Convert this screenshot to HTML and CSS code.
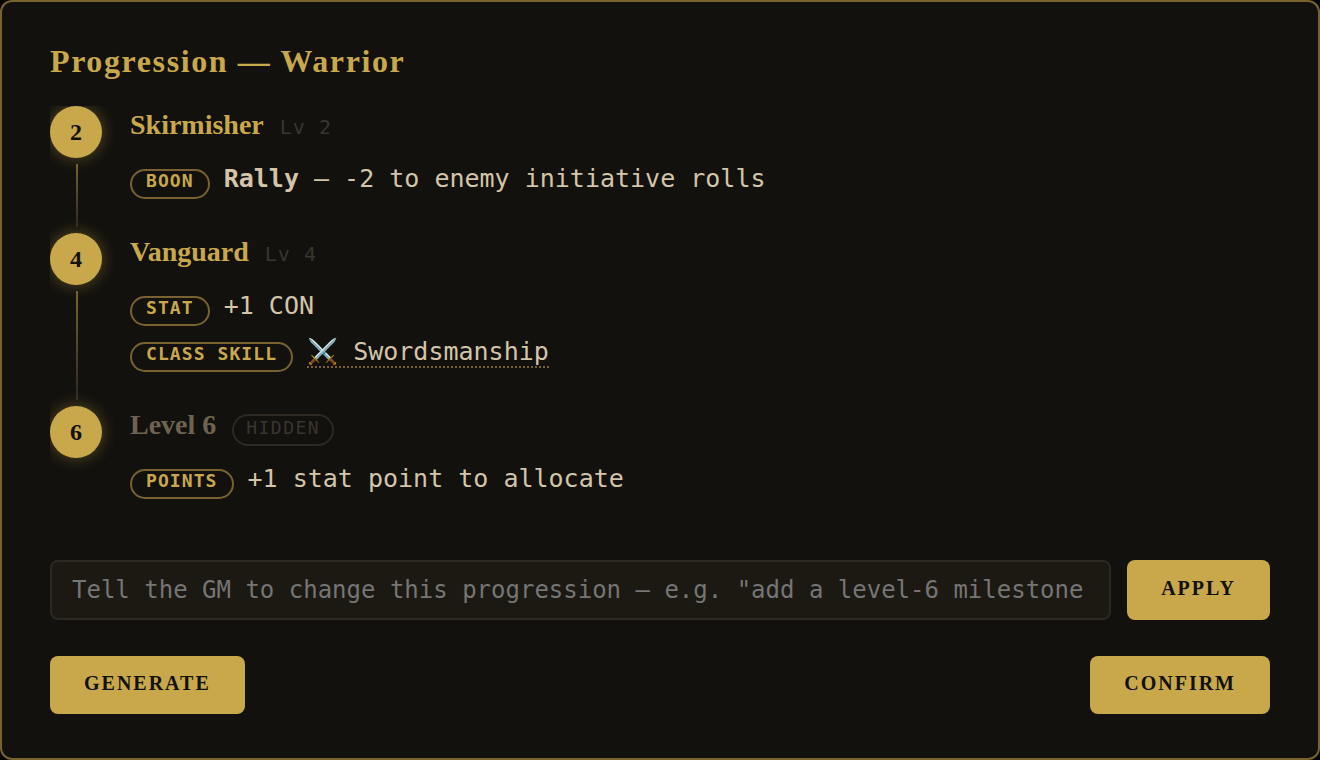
FILE: index.html
```html
<!DOCTYPE html>
<html lang="en">
<head>
    <meta charset="UTF-8">
    <meta name="viewport" content="width=device-width, initial-scale=1.0">
    <title>Progression — Warrior</title>
    <link rel="stylesheet" href="styles.css">
</head>
<body>
    <main class="card">
        <h1>Progression — Warrior</h1>

        <ol class="timeline">
            <li class="milestone">
                <div class="rail">
                    <span class="node">2</span>
                    <span class="line"></span>
                </div>
                <div class="details">
                    <div class="head">
                        <h2>Skirmisher</h2>
                        <span class="level">Lv 2</span>
                    </div>
                    <div class="reward">
                        <span class="tag">BOON</span>
                        <span><strong>Rally</strong> — -2 to enemy initiative rolls</span>
                    </div>
                </div>
            </li>

            <li class="milestone">
                <div class="rail">
                    <span class="node">4</span>
                    <span class="line"></span>
                </div>
                <div class="details">
                    <div class="head">
                        <h2>Vanguard</h2>
                        <span class="level">Lv 4</span>
                    </div>
                    <div class="reward">
                        <span class="tag">STAT</span>
                        <span>+1 CON</span>
                    </div>
                    <div class="reward">
                        <span class="tag">CLASS SKILL</span>
                        <span><a href="#" class="skill">⚔️ Swordsmanship</a></span>
                    </div>
                </div>
            </li>

            <li class="milestone">
                <div class="rail">
                    <span class="node">6</span>
                </div>
                <div class="details">
                    <div class="head">
                        <h2 class="unnamed">Level 6</h2>
                        <span class="tag hidden-tag">HIDDEN</span>
                    </div>
                    <div class="reward">
                        <span class="tag">POINTS</span>
                        <span>+1 stat point to allocate</span>
                    </div>
                </div>
            </li>
        </ol>

        <form class="revise">
            <input type="text" aria-label="Change this progression" placeholder="Tell the GM to change this progression — e.g. &quot;add a level-6 milestone">
            <button type="button">APPLY</button>
        </form>

        <div class="actions">
            <button type="button">GENERATE</button>
            <button type="button">CONFIRM</button>
        </div>
    </main>
</body>
</html>
```
FILE: styles.css
```css
* {
    box-sizing: border-box;
}

body {
    margin: 0;
    background: #000;
    color: #d4c5a9;
    font-family: "DejaVu Sans Mono", monospace;
    font-size: 25px;
}

.card {
    min-height: 100vh;
    padding: 40px 48px 44px;
    background: #12110d;
    border: 2px solid #7a6230;
    border-radius: 12px;
}

h1, h2, .node, button {
    font-family: "Liberation Serif", serif;
    font-weight: bold;
}

h1 {
    margin: 0 0 26px;
    color: #c9a84c;
    font-size: 32px;
    line-height: 38px;
    letter-spacing: 0.05em;
}

/* Timeline */
.timeline {
    margin: 0;
    padding: 0;
    list-style: none;
    overflow: hidden; /* trims the glow of the nodes */
}

.milestone {
    display: flex;
    gap: 26px;
}

.rail {
    display: flex;
    flex-direction: column;
    width: 54px;
    flex-shrink: 0;
}

.node {
    width: 52px;
    height: 52px;
    border-radius: 50%;
    background: #c9a84c;
    color: #12110d;
    font-size: 24px;
    line-height: 52px;
    text-align: center;
    box-shadow: 0 0 16px rgba(201, 168, 76, 0.4);
}

.line {
    flex: 1;
    width: 2px;
    margin: 6px auto;
    background: linear-gradient(#7a6230, #2e2822);
}

.details {
    flex: 1;
    padding-bottom: 33px;
}

.head {
    display: flex;
    align-items: baseline;
    gap: 16px;
    height: 40px;
    margin-bottom: 14px;
}

h2 {
    margin: 0;
    color: #c9a84c;
    font-size: 28px;
    line-height: 38px;
}

.unnamed {
    color: #6e6350;
}

.level {
    color: #3a352e;
    font-size: 20px;
    letter-spacing: 0.05em;
}

.reward {
    display: flex;
    align-items: baseline;
    gap: 14px;
    height: 40px;
    line-height: 38px;
}

.reward + .reward {
    margin-top: 6px;
}

.tag {
    padding: 0 14px 6px;
    border: 2px solid #7a6230;
    border-radius: 16px;
    color: #c9a84c;
    font-size: 18px;
    font-weight: bold;
    line-height: 20px;
    letter-spacing: 0.06em;
}

.hidden-tag {
    padding: 2px 12px 6px;
    border-color: #2e2822;
    color: #3a352e;
    font-weight: normal;
    letter-spacing: 0.08em;
}

.skill {
    color: inherit;
    text-decoration: none;
    border-bottom: 2px dotted #7a6230;
}

/* Controls */
.revise {
    display: flex;
    gap: 16px;
    margin: 27px 0 36px;
}

.revise input {
    flex: 1;
    min-width: 0;
    height: 60px;
    padding: 0 20px;
    background: #1c1912;
    border: 2px solid #2e2822;
    border-radius: 8px;
    color: #d4c5a9;
    font-family: inherit;
    font-size: 24px;
}

.revise input::placeholder {
    color: #757575;
}

button {
    padding: 16px 34px 20px;
    background: #c9a84c;
    border: none;
    border-radius: 8px;
    color: #12110d;
    font-size: 20px;
    line-height: 22px;
    letter-spacing: 0.1em;
    cursor: pointer;
}

.actions {
    display: flex;
    justify-content: space-between;
}
```
